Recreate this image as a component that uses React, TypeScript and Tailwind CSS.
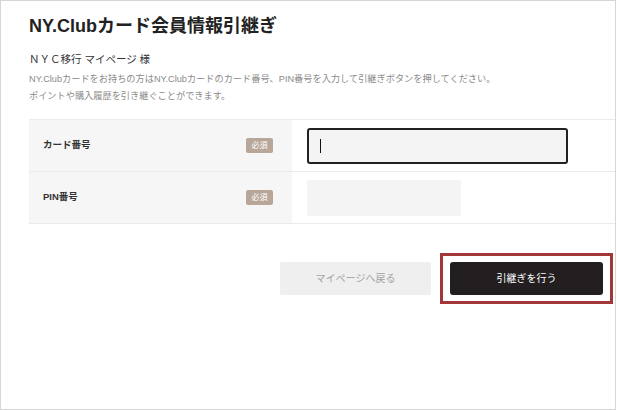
const font = { fontFamily: '"Liberation Sans", "Noto Sans CJK JP", sans-serif' }

function Badge() {
  return (
    <span className="flex items-center justify-center w-[27px] h-[15px] rounded-[2px] bg-[#b8a799] text-white text-[8px] leading-none">
      必須
    </span>
  )
}

export default function App() {
  return (
    <div
      className="w-[616px] h-[410px] border border-[#d6d6d6] bg-white text-[#333] overflow-hidden"
      style={font}
    >
      <div className="pl-[28px] pt-[12px]">
        <h1 className="text-[18px] leading-[26px] font-bold text-[#222]">
          NY.Clubカード会員情報引継ぎ
        </h1>
        <p className="mt-[12px] text-[10.5px] leading-[16px] text-[#333]">ＮＹＣ移行 マイページ 様</p>
        <p className="mt-[4px] text-[9.2px] leading-[17px] text-[#8a8a8a]">
          NY.Clubカードをお持ちの方はNY.Clubカードのカード番号、PIN番号を入力して引継ぎボタンを押してください。
          <br />
          ポイントや購入履歴を引き継ぐことができます。
        </p>
      </div>

      <div className="ml-[28px] mt-[14px] border-t border-[#ebebeb]">
        {/* Card number */}
        <div className="flex h-[52px] border-b border-[#ebebeb]">
          <div className="w-[263px] bg-[#f6f6f6] flex items-center justify-between pl-[14px] pr-[19px]">
            <span className="text-[9.5px] font-semibold text-[#333]">カード番号</span>
            <Badge />
          </div>
          <div className="flex-1 flex items-center pl-[15px]">
            <div className="w-[261px] h-[36px] rounded-[3px] border-2 border-[#222] bg-[#f4f4f4] flex items-center pl-[11px]">
              <span className="w-px h-[14px] bg-[#111]" />
            </div>
          </div>
        </div>
        {/* PIN */}
        <div className="flex h-[52px] border-b border-[#ebebeb]">
          <div className="w-[263px] bg-[#f6f6f6] flex items-center justify-between pl-[14px] pr-[19px]">
            <span className="text-[9.5px] font-semibold text-[#333]">PIN番号</span>
            <Badge />
          </div>
          <div className="flex-1 flex items-center pl-[15px]">
            <div className="w-[154px] h-[36px] rounded-[2px] bg-[#f4f4f4]" />
          </div>
        </div>
      </div>

      <div className="mt-[29px] flex justify-end items-center gap-[9px] pr-[2px]">
        <button className="w-[151px] h-[33px] rounded-[2px] bg-[#efefef] text-[#a3a3a3] text-[10px]">
          マイページへ戻る
        </button>
        <div className="border-[3px] border-[#a33636] px-[7px] py-[6px]">
          <button className="block w-[153px] h-[33px] rounded-[3px] bg-[#231f20] text-white text-[10px]">
            引継ぎを行う
          </button>
        </div>
      </div>
    </div>
  )
}
